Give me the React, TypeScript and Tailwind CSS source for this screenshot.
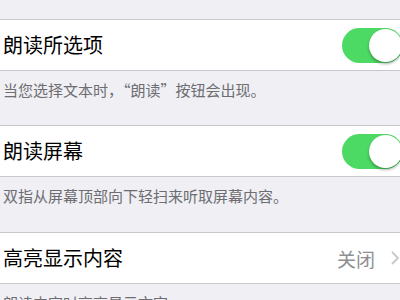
const Toggle = () => (
  <div className="relative ml-auto mr-[-3px] h-[35px] w-[61px] rounded-full bg-[#4cd964]">
    <div className="absolute right-[1px] top-[1px] h-[33px] w-[33px] rounded-full bg-white shadow-[0_2px_3px_rgba(0,0,0,0.3)]" />
  </div>
);

const Row = ({ title, children }: { title: string; children?: React.ReactNode }) => (
  <div className="flex h-[52px] items-center border-y border-[#c8c7cc] bg-white pl-[3px] pr-0">
    <span className="text-[20px] leading-none text-black">{title}</span>
    {children}
  </div>
);

const Note = ({ text }: { text: string }) => (
  <div className="pl-[3px] pt-[9px] text-[15px] leading-[20px] text-[#6d6d72]">{text}</div>
);

export default function App() {
  return (
    <div
      className="h-[300px] w-[400px] overflow-hidden bg-[#efeff4]"
      style={{ fontFamily: '"Noto Sans CJK SC", "Noto Sans", sans-serif' }}
    >
      <div className="h-[19px]" />
      <Row title="朗读所选项">
        <Toggle />
      </Row>
      <Note text="当您选择文本时，“朗读”按钮会出现。" />
      <div className="h-[25px]" />
      <Row title="朗读屏幕">
        <Toggle />
      </Row>
      <Note text="双指从屏幕顶部向下轻扫来听取屏幕内容。" />
      <div className="h-[26px]" />
      <Row title="高亮显示内容">
        <span className="ml-auto text-[19px] leading-none text-[#8e8e93]">关闭</span>
        <svg className="ml-[16px] mr-[1px]" width="8" height="14" viewBox="0 0 8 14" fill="none">
          <path d="M1 1 L7 7 L1 13" stroke="#c7c7cc" strokeWidth="1.8" />
        </svg>
      </Row>
      <Note text="朗读内容时高亮显示文字。" />
    </div>
  );
}
